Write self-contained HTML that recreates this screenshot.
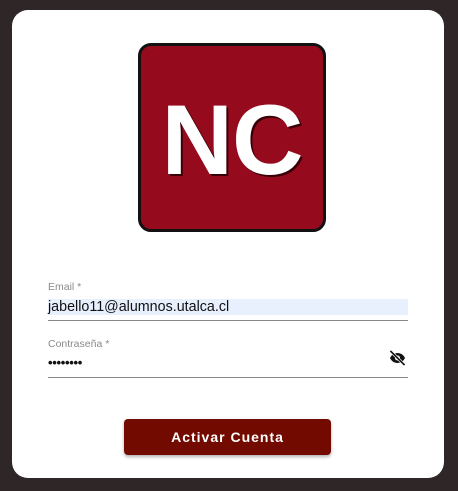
<!DOCTYPE html>
<html><head><style>
html,body{margin:0;padding:0;width:458px;height:491px;background:#2f2727;overflow:hidden;font-family:"Liberation Sans",sans-serif}
.card{position:absolute;left:12px;top:10px;width:432px;height:468px;background:#fff;border-radius:16px}
.logo{position:absolute;left:138px;top:43px;width:182px;height:183px;background:#960a1e;border:3px solid #111;border-radius:13px}
.nc{position:absolute;left:0;width:100%;top:44px;text-align:center;color:#fff;font-weight:bold;font-size:99px;line-height:100px;text-shadow:2px 2px 0 #3a0008;letter-spacing:-1px}
.lbl{position:absolute;left:48px;font-size:10.5px;color:#8a8a8a}
.inp{position:absolute;left:48px;width:360px;font-size:14.3px;color:#111}
.line{position:absolute;left:48px;width:360px;height:1px;background:#888}
.btn{position:absolute;left:124px;top:419px;width:207px;height:36px;background:#730a00;border-radius:4px;color:#fff;font-weight:bold;font-size:14px;letter-spacing:1px;text-align:center;line-height:36px;box-shadow:0 2px 3px rgba(0,0,0,.3)}
</style></head><body>
<div class="card"></div>
<div class="logo"><div class="nc">NC</div></div>
<div class="lbl" style="top:281px">Email *</div>
<div class="inp" style="top:299px;height:16px;background:#e8f0fe;line-height:16px">jabello11@alumnos.utalca.cl</div>
<div class="line" style="top:320px"></div>
<div class="lbl" style="top:338px">Contraseña *</div>
<div class="inp" style="top:355px;font-size:13px;letter-spacing:-0.3px;font-weight:bold">••••••••</div>
<svg style="position:absolute;left:387px;top:348px" width="21" height="20" viewBox="0 0 24 24"><path d="M12 6c3.8 0 7.2 2.1 9 6-1.8 3.9-5.2 6-9 6s-7.2-2.1-9-6c1.8-3.9 5.2-6 9-6z" fill="#111"/><circle cx="12" cy="12" r="3" fill="#fff"/><circle cx="12" cy="12" r="1.6" fill="#111"/><path d="M3 3l18 18" stroke="#fff" stroke-width="3.5"/><path d="M3.5 3.5l17 17" stroke="#111" stroke-width="2"/></svg>
<div class="line" style="top:377px"></div>
<div class="btn">Activar Cuenta</div>
</body></html>
